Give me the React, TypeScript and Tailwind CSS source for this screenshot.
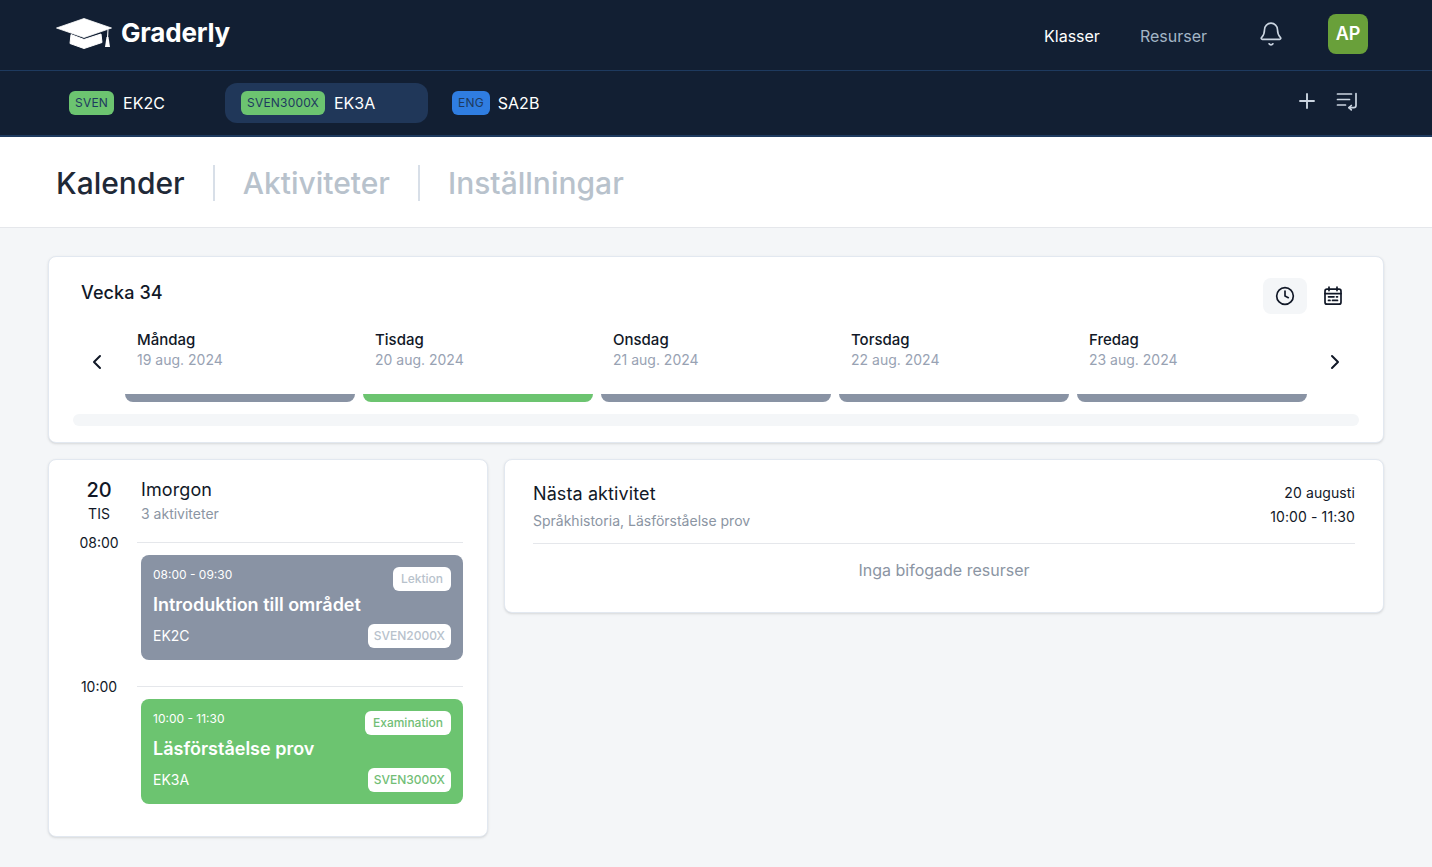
import React from "react"
import { Bell, ChevronLeft, ChevronRight, Clock, Plus } from "lucide-react"

const days = [
  { name: "Måndag", date: "19 aug. 2024", bar: "bg-[#8993a4]" },
  { name: "Tisdag", date: "20 aug. 2024", bar: "bg-[#6cc470]" },
  { name: "Onsdag", date: "21 aug. 2024", bar: "bg-[#8993a4]" },
  { name: "Torsdag", date: "22 aug. 2024", bar: "bg-[#8993a4]" },
  { name: "Fredag", date: "23 aug. 2024", bar: "bg-[#8993a4]" },
]

function Logo() {
  return (
    <svg width="56" height="31" viewBox="0 0 56 31" className="shrink-0">
      <path fill="#fff" strokeLinejoin="round" stroke="#fff" strokeWidth="0.8" d="M28 0.5 L55.5 10 L28 19.5 L0.5 10 Z" />
      <path fill="#fff" strokeLinejoin="round" stroke="#fff" strokeWidth="1" d="M15 16.5 L28 21.5 L45 16 L46 24.5 L28 30.5 L14 25.5 Z" />
      <path fill="none" stroke="#fff" strokeWidth="1.1" d="M52 11.5 L51.5 20" />
      <path fill="#fff" d="M50.5 19 L52.5 19 L54 29 L49 29 Z" />
    </svg>
  )
}

function QueueIcon() {
  return (
    <svg width="22" height="22" viewBox="0 0 22 22" fill="none" stroke="#cbd5e1" strokeWidth="1.7" strokeLinecap="round" strokeLinejoin="round">
      <path d="M1.5 4h14M1.5 9.5h12M1.5 15h8" />
      <path d="M20 3.5v12c0 1.4-1 2.2-2.2 2.2H13" />
      <path d="M15.3 15.5 13 17.7l2.3 2.2" />
    </svg>
  )
}

function CalendarIcon() {
  return (
    <svg width="20" height="20" viewBox="0 0 20 20" fill="none" stroke="#111827" strokeWidth="1.7" strokeLinecap="round" strokeLinejoin="round">
      <rect x="2" y="3.2" width="16" height="15" rx="2" />
      <path d="M2 7.6h16M6 1.2v3.4M14 1.2v3.4M5.5 10.8h5.5M13.5 10.8h1M5.5 14.4h1.5M9.5 14.4h5" />
    </svg>
  )
}

function Subject({ label, className }: { label: string; className: string }) {
  return (
    <span className={`h-6 rounded-md px-1.5 flex items-center text-xs leading-none tracking-[0.2px] text-[#1e3a5f] ${className}`}>
      {label}
    </span>
  )
}

function Activity(props: { time: string; type: string; title: string; group: string; course: string; bg: string; fg: string }) {
  return (
    <div className={`h-[105px] rounded-lg p-3 text-white flex flex-col ${props.bg}`}>
      <div className="flex justify-between">
        <span className="text-xs leading-4">{props.time}</span>
        <span className={`h-6 px-2 bg-white rounded-md flex items-center text-xs font-medium ${props.fg}`}>{props.type}</span>
      </div>
      <div className="text-lg leading-6 font-semibold mt-[2px]">{props.title}</div>
      <div className="flex justify-between items-center mt-[7px]">
        <span className="text-sm">{props.group}</span>
        <span className={`h-6 px-1.5 bg-white rounded-md flex items-center text-xs font-medium ${props.fg}`}>{props.course}</span>
      </div>
    </div>
  )
}

export default function App() {
  return (
    <div className="min-h-[867px] bg-[#f4f6f8] font-['Inter',sans-serif] text-[#111827]">
      <header className="h-[71px] bg-[#121f33] border-b border-[#1e3a5f] pl-[56px] pr-[64px] flex items-center justify-between">
        <div className="flex items-center gap-[9px] -mt-[4px]">
          <Logo />
          <span className="text-[26px] font-bold text-white tracking-[-0.2px] leading-none -mt-[1px]">Graderly</span>
        </div>
        <div className="flex items-center">
          <span className="text-base text-white mt-[2px]">Klasser</span>
          <span className="ml-10 text-base text-[#a3b5c6] mt-[2px]">Resurser</span>
          <Bell size={26} strokeWidth={1.5} className="ml-[51px] mb-[2px] text-[#cbd5e1]" />
          <div className="ml-[44px] mb-[2px] w-10 h-10 rounded-lg bg-[#69a03a] text-white font-semibold text-lg flex items-center justify-center">AP</div>
        </div>
      </header>
      <div className="h-[66px] bg-[#121f33] border-b-2 border-[#1e3a5f] pl-[56px] pr-[74px] flex items-center">
        <div className="w-[169px] h-10 px-[13px] flex items-center gap-[9px]">
          <Subject label="SVEN" className="bg-[#6cc470]" />
          <span className="text-base text-white">EK2C</span>
        </div>
        <div className="w-[203px] h-10 px-4 rounded-xl bg-[#203759] flex items-center gap-[9px]">
          <Subject label="SVEN3000X" className="bg-[#6cc470]" />
          <span className="text-base text-white">EK3A</span>
        </div>
        <div className="ml-6 flex items-center gap-2">
          <Subject label="ENG" className="bg-[#2f7de1]" />
          <span className="text-base text-white">SA2B</span>
        </div>
        <div className="ml-auto flex items-center gap-[17px] -mt-1">
          <Plus size={24} strokeWidth={1.9} className="text-[#cbd5e1]" />
          <QueueIcon />
        </div>
      </div>
      <nav className="h-[91px] bg-white border-b border-[#e5e7eb] pt-[2px] pl-[56px] flex items-center text-[30px] font-medium">
        <span className="h-9 text-[#1f2937] pr-[28px] border-r-2 border-[#d8dfe8] leading-9">Kalender</span>
        <span className="h-9 text-[#b8c2cc] pl-[28px] pr-[28px] border-r-2 border-[#d8dfe8] leading-9">Aktiviteter</span>
        <span className="h-9 text-[#b8c2cc] pl-[28px] leading-9">Inställningar</span>
      </nav>
      <main className="px-12 pt-7 flex flex-col gap-4">
        <section className="h-[187px] bg-white rounded-lg border border-[#e2e8f0] shadow-sm px-6">
          <div className="flex justify-between items-start pt-[21px] pl-2 pr-[4px] h-[72px]">
            <h2 className="text-lg font-medium leading-7 mt-[1px] tracking-[0.1px]">Vecka 34</h2>
            <div className="flex items-center gap-1 h-9">
              <span className="w-11 h-9 rounded-lg bg-[#f4f6f8] flex items-center justify-center">
                <Clock size={20} strokeWidth={2} />
              </span>
              <span className="w-11 h-9 flex items-center justify-center">
                <CalendarIcon />
              </span>
            </div>
          </div>
          <div className="flex items-center">
            <div className="w-[52px] pl-[12px] -mt-[7px]">
              <ChevronLeft size={24} strokeWidth={2} />
            </div>
            <div className="flex gap-2 flex-1">
              {days.map((d) => (
                <div key={d.name} className="w-[230px]">
                  <div className="pl-3 h-[65px]">
                    <div className="text-[15px] font-medium leading-[22px]">{d.name}</div>
                    <div className="text-sm text-[#98a2b3] leading-[20px] -mt-[1px]">{d.date}</div>
                  </div>
                  <div className={`h-2 rounded-b-lg ${d.bar}`} />
                </div>
              ))}
            </div>
            <div className="w-[52px] pl-[16px] -mt-[7px]">
              <ChevronRight size={24} strokeWidth={2} />
            </div>
          </div>
          <div className="h-3 mt-3 rounded-lg bg-[#f4f6f8]" />
        </section>
        <div className="flex gap-4 items-start">
          <section className="w-[440px] h-[378px] bg-white rounded-lg border border-[#e2e8f0] shadow-sm px-6 pt-4 flex">
            <div className="w-[52px] text-center">
              <div className="text-xl font-medium leading-7">20</div>
              <div className="text-sm leading-5">TIS</div>
              <div className="text-sm leading-5 mt-[9px]">08:00</div>
              <div className="text-sm leading-5 mt-[124px]">10:00</div>
            </div>
            <div className="flex-1 pl-[15px]">
              <div className="pl-[1px] h-[66px]">
                <div className="text-lg leading-7 tracking-[0.1px]">Imorgon</div>
                <div className="text-sm leading-5 text-[#8b95a3]">3 aktiviteter</div>
              </div>
              <div className="border-t border-[#e5e7eb] -ml-[3px] mb-3" />
              <div className="ml-[1px]">
                <Activity time="08:00 - 09:30" type="Lektion" title="Introduktion till området" group="EK2C" course="SVEN2000X" bg="bg-[#8993a4]" fg="text-[#b8c2cc]" />
              </div>
              <div className="border-t border-[#e5e7eb] -ml-[3px] mt-[26px] mb-3" />
              <div className="ml-[1px]">
                <Activity time="10:00 - 11:30" type="Examination" title="Läsförståelse prov" group="EK3A" course="SVEN3000X" bg="bg-[#6cc470]" fg="text-[#72be76]" />
              </div>
            </div>
          </section>
          <section className="flex-1 h-[154px] bg-white rounded-lg border border-[#e2e8f0] shadow-sm px-7 pt-5">
            <div className="flex justify-between h-[64px] border-b border-[#e5e7eb]">
              <div>
                <div className="text-lg leading-7 tracking-[0.1px]">Nästa aktivitet</div>
                <div className="text-sm leading-5 mt-[3px] text-[#8b95a3]">Språkhistoria, Läsförståelse prov</div>
              </div>
              <div className="text-right text-sm leading-5 tracking-[0.1px]">
                <div className="mt-[3px]">20 augusti</div>
                <div className="mt-1">10:00 - 11:30</div>
              </div>
            </div>
            <div className="text-center text-base leading-6 mt-[14px] text-[#8b95a3]">Inga bifogade resurser</div>
          </section>
        </div>
      </main>
    </div>
  )
}
